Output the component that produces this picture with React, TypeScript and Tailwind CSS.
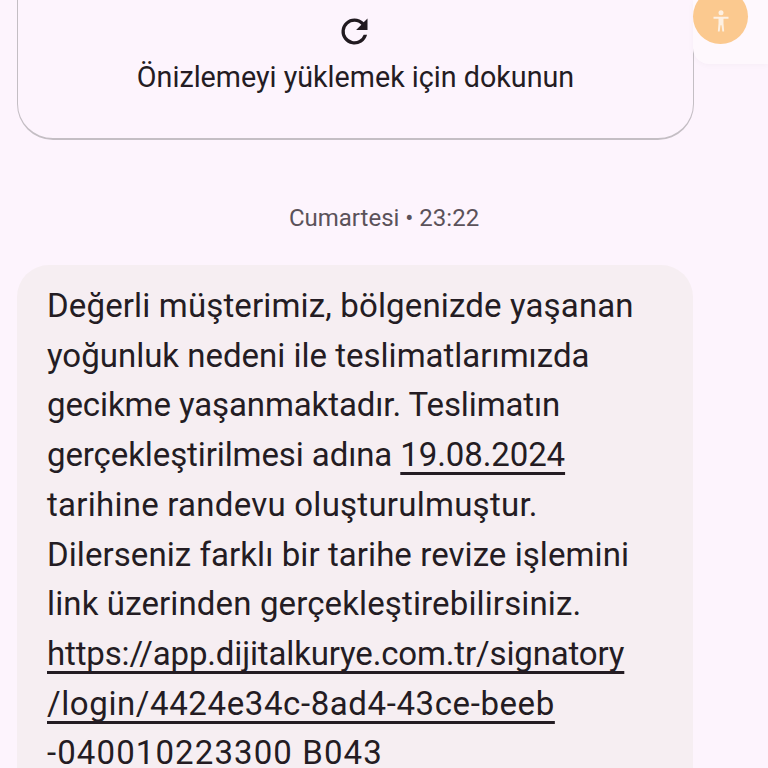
export default function App() {
  const underline = "underline decoration-[2.5px] underline-offset-[6px] [text-decoration-skip-ink:none]";
  return (
    <div className="relative h-[768px] w-[768px] overflow-hidden bg-[#fdf4fd] font-['Roboto',sans-serif] text-[#241c23]">
      <div className="ml-[17px] mt-[-60px] flex h-[200px] w-[677px] flex-col items-center rounded-b-[36px] border border-b-2 border-[#c4bec4] bg-[#fdf4fd] pt-[71px]">
        <svg width="39" height="39" viewBox="0 0 24 24" fill="#211a20" className="mr-[2px]">
          <path d="M17.65 6.35A7.95 7.95 0 0 0 12 4a8 8 0 1 0 7.73 10h-2.08A6 6 0 1 1 12 6c1.66 0 3.14.69 4.22 1.78L13 11h7V4l-2.35 2.35z" />
        </svg>
        <div className="mt-[8px] text-[28.7px] leading-[36px]">Önizlemeyi yüklemek için dokunun</div>
      </div>
      <div className="mt-[63px] w-full text-center text-[24px] leading-[30px] text-[#5b525a]">Cumartesi • 23:22</div>
      <div className="ml-[17px] mt-[32px] w-[676px] rounded-[32px] bg-[#f6eef2] pb-[40px] pl-[30px] pt-[16px] text-[33px] leading-[49.7px]">
        <div className="tracking-[0.15px]">Değerli müşterimiz, bölgenizde yaşanan</div>
        <div>yoğunluk nedeni ile teslimatlarımızda</div>
        <div className="tracking-[-0.1px]">gecikme yaşanmaktadır. Teslimatın</div>
        <div className="tracking-[-0.1px]">gerçekleştirilmesi adına <span className={underline}>19.08.2024</span></div>
        <div className="tracking-[0.25px]">tarihine randevu oluşturulmuştur.</div>
        <div className="tracking-[0.07px]">Dilerseniz farklı bir tarihe revize işlemini</div>
        <div className="tracking-[0.13px]">link üzerinden gerçekleştirebilirsiniz.</div>
        <div className={`${underline} tracking-[-0.15px]`}>https://app.dijitalkurye.com.tr/signatory</div>
        <div className={`${underline} tracking-[0.6px]`}>/login/4424e34c-8ad4-43ce-beeb</div>
        <div className="tracking-[1.1px]">-040010223300 B043</div>
      </div>
      <div className="absolute right-0 top-0 h-[64px] w-[75px] rounded-bl-[16px] bg-[#fef8fd] shadow-[0_1px_6px_rgba(0,0,0,0.03)]">
        <div className="absolute left-[0px] top-[-11px] flex h-[55px] w-[55px] items-center justify-center rounded-full bg-[#fbc98f]">
          <svg width="20" height="26" viewBox="0 0 24 30" fill="#fdf0e2" className="mt-[9px]">
            <circle cx="12" cy="5" r="3" />
            <path d="M3 10h18v2.4h-6v5.6l.8 9.5h-2.2L12.6 20h-1.2l-1 7.5H8.2L9 18v-5.6H3z" />
          </svg>
        </div>
      </div>
    </div>
  );
}
